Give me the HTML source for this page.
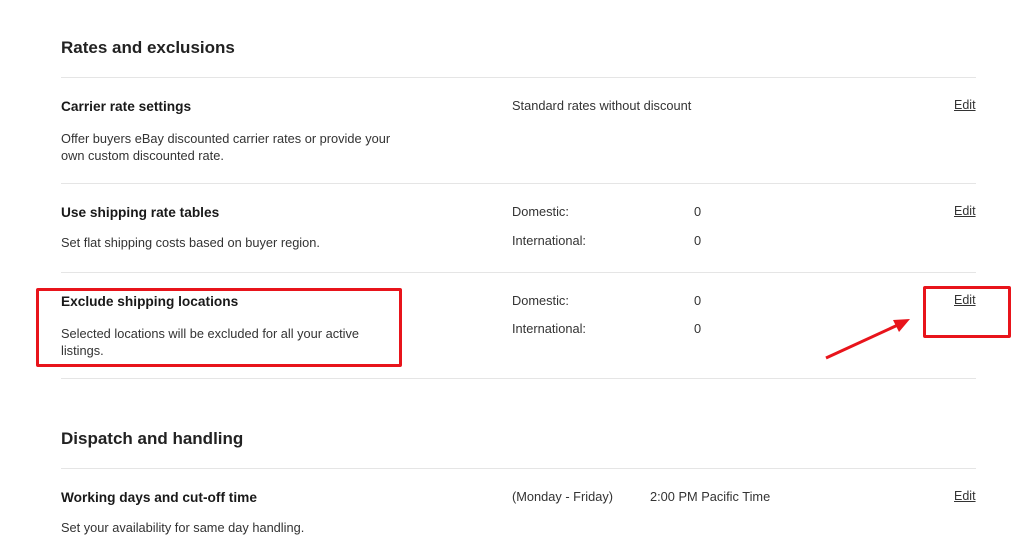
<!DOCTYPE html><html><head><style>
body{margin:0;width:1024px;height:533px;background:#fff;position:relative;overflow:hidden;font-family:"Liberation Sans",Arial,sans-serif;color:#191919}
.a{position:absolute;white-space:nowrap}
.h2{font-size:17px;font-weight:bold;color:#222}
.h3{font-size:13.7px;font-weight:bold}
.t{font-size:12.8px;color:#333}
.e{font-size:12.5px;text-decoration:underline;color:#333}
.l{position:absolute;left:61px;width:915px;height:1px;background:#e5e5e5}
.r{position:absolute;border:3px solid #e8141b;border-radius:2px}
</style></head><body>
<div class="a h2" style="left:61px;top:38px">Rates and exclusions</div>
<div class="l" style="top:77px"></div>
<div class="a h3" style="left:61px;top:99px">Carrier rate settings</div>
<div class="a t" style="left:61px;top:130px;line-height:17px">Offer buyers eBay discounted carrier rates or provide your<br>own custom discounted rate.</div>
<div class="a t" style="left:512px;top:98px">Standard rates without discount</div>
<div class="a e" style="left:954px;top:98px">Edit</div>
<div class="l" style="top:183px"></div>
<div class="a h3" style="left:61px;top:205px">Use shipping rate tables</div>
<div class="a t" style="left:61px;top:235px">Set flat shipping costs based on buyer region.</div>
<div class="a t" style="left:512px;top:204px">Domestic:</div>
<div class="a t" style="left:694px;top:204px">0</div>
<div class="a t" style="left:512px;top:233px">International:</div>
<div class="a t" style="left:694px;top:233px">0</div>
<div class="a e" style="left:954px;top:204px">Edit</div>
<div class="l" style="top:272px"></div>
<div class="a h3" style="left:61px;top:294px">Exclude shipping locations</div>
<div class="a t" style="left:61px;top:325px;line-height:17px">Selected locations will be excluded for all your active<br>listings.</div>
<div class="a t" style="left:512px;top:293px">Domestic:</div>
<div class="a t" style="left:694px;top:293px">0</div>
<div class="a t" style="left:512px;top:321px">International:</div>
<div class="a t" style="left:694px;top:321px">0</div>
<div class="a e" style="left:954px;top:293px">Edit</div>
<div class="l" style="top:378px"></div>
<div class="a h2" style="left:61px;top:429px">Dispatch and handling</div>
<div class="l" style="top:468px"></div>
<div class="a h3" style="left:61px;top:490px">Working days and cut-off time</div>
<div class="a t" style="left:61px;top:520px">Set your availability for same day handling.</div>
<div class="a t" style="left:512px;top:489px">(Monday - Friday)</div>
<div class="a t" style="left:650px;top:489px">2:00 PM Pacific Time</div>
<div class="a e" style="left:954px;top:489px">Edit</div>
<div class="r" style="left:36px;top:288px;width:360px;height:73px"></div>
<div class="r" style="left:923px;top:286px;width:82px;height:46px"></div>
<svg class="a" style="left:0;top:0" width="1024" height="533"><line x1="826" y1="358" x2="900" y2="324" stroke="#e8141b" stroke-width="3"/><polygon points="910,319 893,320 899,332" fill="#e8141b"/></svg>
</body></html>
